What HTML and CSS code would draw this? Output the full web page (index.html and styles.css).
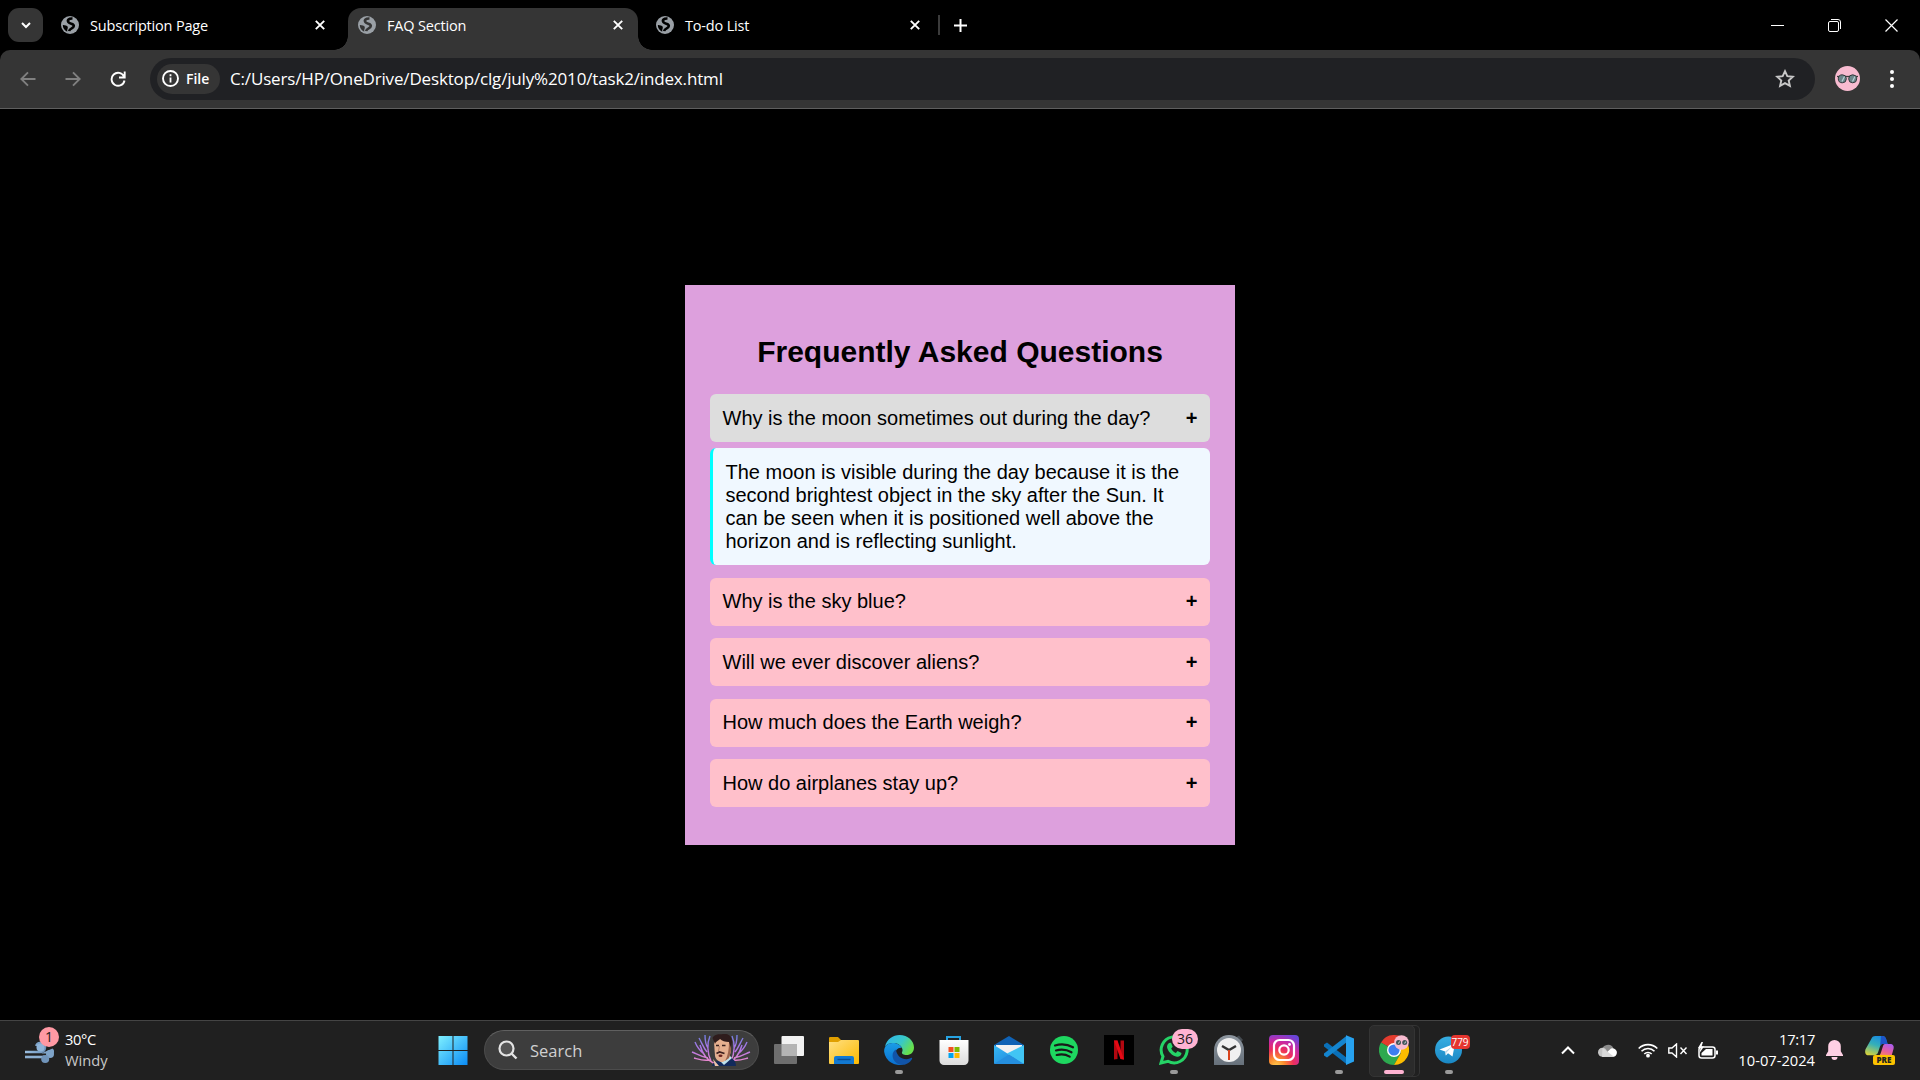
FILE: index.html
```html
<!DOCTYPE html>
<html lang="en">
<head>
<meta charset="utf-8">
<title>FAQ Section</title>
<link rel="stylesheet" href="styles.css">
</head>
<body>
<svg class="defs" width="0" height="0" aria-hidden="true">
  <defs>
    <symbol id="globe" viewBox="0 0 18 18">
      <circle cx="9" cy="9" r="9" fill="#9aa0a6"/>
      <path d="M11.500 2.500C7.800 2.300 6 4.200 7.500 6.200s5.500 1 5.300 3.800-4.300 1.800-4.600 5.200" fill="none" stroke="var(--hole)" stroke-width="2.600"/>
      <path d="M1.800 9c1.500.2 4.700.2 5 2.300.2 1.500-.8 1.700-.6 4.400C3.500 14.500 1.800 12 1.800 9z" fill="var(--hole)"/>
    </symbol>
    <symbol id="cross" viewBox="0 0 10 10"><path d="M.8.8l8.400 8.400M9.200.8L.8 9.200" stroke="#fff" stroke-width="1.900"/></symbol>
    <linearGradient id="winG" x1="0" y1="0" x2="1" y2="1"><stop offset="0" stop-color="#7ff0ff"/><stop offset="1" stop-color="#0a8bf5"/></linearGradient>
    <linearGradient id="folderG" x1="0" y1="0" x2="1" y2="1"><stop offset="0" stop-color="#ffe083"/><stop offset="1" stop-color="#fcb900"/></linearGradient>
    <linearGradient id="edgeTop" x1="0" y1="0" x2="1" y2=".5"><stop offset="0" stop-color="#2fb4ee"/><stop offset=".6" stop-color="#38c8c8"/><stop offset="1" stop-color="#67e04c"/></linearGradient>
    <linearGradient id="edgeLow" x1="0" y1="0" x2="0" y2="1"><stop offset="0" stop-color="#1a9de6"/><stop offset="1" stop-color="#0a6fd0"/></linearGradient>
    <linearGradient id="mailG" x1="0" y1="0" x2="1" y2="1"><stop offset="0" stop-color="#37b9f5"/><stop offset="1" stop-color="#1b7fd8"/></linearGradient>
    <linearGradient id="storeG" x1="0" y1="0" x2="0" y2="1"><stop offset="0" stop-color="#fff"/><stop offset="1" stop-color="#dcdcdc"/></linearGradient>
    <linearGradient id="clockG" x1="0" y1="0" x2="0" y2="1"><stop offset="0" stop-color="#8d969f"/><stop offset="1" stop-color="#67717b"/></linearGradient>
    <radialGradient id="instaG" cx=".25" cy="1.050" r="1.150"><stop offset="0" stop-color="#fed150"/><stop offset=".25" stop-color="#fb8a2e"/><stop offset=".5" stop-color="#ee2f5b"/><stop offset=".75" stop-color="#c82aa4"/><stop offset="1" stop-color="#6a45d8"/></radialGradient>
    <linearGradient id="tgG" x1="0" y1="0" x2="0" y2="1"><stop offset="0" stop-color="#37aee2"/><stop offset="1" stop-color="#1a87c4"/></linearGradient>
    <linearGradient id="windG" x1="0" y1="0" x2="1" y2="0"><stop offset="0" stop-color="#9cbfe0"/><stop offset="1" stop-color="#6d94bd"/></linearGradient>
    <linearGradient id="coA" x1=".6" y1="0" x2=".2" y2="1"><stop offset="0" stop-color="#1a8de0"/><stop offset=".45" stop-color="#35b0b8"/><stop offset="1" stop-color="#d8d23a"/></linearGradient>
    <linearGradient id="coB" x1=".8" y1="0" x2=".3" y2="1"><stop offset="0" stop-color="#a95cf0"/><stop offset=".6" stop-color="#e8609c"/><stop offset="1" stop-color="#f88a5a"/></linearGradient>
    <linearGradient id="coral" x1="0" y1="0" x2="0" y2="1"><stop offset="0" stop-color="#6f7ee0"/><stop offset=".5" stop-color="#b276e4"/><stop offset="1" stop-color="#f58cc8"/></linearGradient>
  </defs>
</svg>

<header class="tabs">
  <button class="tab-search"><svg width="10" height="7" viewBox="0 0 10 7"><path d="M1 1l4 4 4-4" fill="none" stroke="#fff" stroke-width="2"/></svg></button>
  <div class="tab tab-first"><svg class="globe"><use href="#globe"/></svg><span class="tab-title">Subscription Page</span><svg class="cross"><use href="#cross"/></svg></div>
  <div class="tab tab-active"><svg class="globe"><use href="#globe"/></svg><span class="tab-title">FAQ Section</span><svg class="cross"><use href="#cross"/></svg></div>
  <div class="tab tab-last"><svg class="globe"><use href="#globe"/></svg><span class="tab-title">To-do List</span><svg class="cross"><use href="#cross"/></svg></div>
  <span class="tab-line"></span>
  <svg class="plus" width="13" height="13" viewBox="0 0 13 13"><path d="M6.500 0v13M0 6.500h13" stroke="#fff" stroke-width="2"/></svg>
  <div class="window-buttons">
    <svg width="13" height="13" viewBox="0 0 13 13"><path d="M0 6.500h13" stroke="#fff"/></svg>
    <svg width="13" height="13" viewBox="0 0 13 13" fill="none" stroke="#fff"><rect x=".5" y="2.500" width="10" height="10" rx="1.500"/><path d="M3 .5h7a2.500 2.500 0 0 1 2.500 2.500v7" /></svg>
    <svg width="13" height="13" viewBox="0 0 13 13"><path d="M.5.5l12 12M12.500.5l-12 12" stroke="#fff" stroke-width="1.200"/></svg>
  </div>
</header>

<nav class="toolbar">
  <svg class="nav-icon dim" viewBox="0 0 16 16"><path d="M15.500 8H1.500M8 1.300L1.300 8 8 14.700"/></svg>
  <svg class="nav-icon dim" viewBox="0 0 16 16"><path d="M.5 8h14M8 1.300L14.700 8 8 14.700"/></svg>
  <svg class="nav-icon" viewBox="0 0 16 16"><path d="M14 5.500A6.500 6.500 0 1 0 14.500 9.500M14.700.5v6H9"/></svg>
  <div class="omnibox">
    <div class="chip"><svg width="17" height="17" viewBox="0 0 17 17"><circle cx="8.500" cy="8.500" r="7.500" fill="none" stroke="#fff" stroke-width="1.900"/><path d="M8.500 7.500v5M8.500 4.300v1.900" stroke="#fff" stroke-width="1.800"/></svg><span class="chip-text">File</span></div>
    <span class="url">C:/Users/HP/OneDrive/Desktop/clg/july%2010/task2/index.html</span>
    <svg class="star" width="20" height="19" viewBox="0 0 20 19"><path d="M10 2.200l2.300 5 5.500.6-4.100 3.700 1.200 5.400-4.900-2.800-4.900 2.800 1.200-5.400L2.200 7.800l5.500-.6z" fill="none" stroke="#c7c7c7" stroke-width="1.900"/></svg>
  </div>
  <svg class="avatar" viewBox="0 0 25 25"><circle cx="12.500" cy="12.500" r="12.500" fill="#f8bbd0"/><path d="M2 10.500h21" stroke="#3d3d3d" stroke-width="1.300"/><circle cx="7.300" cy="12.800" r="4" fill="#6d858a" stroke="#33393c"/><circle cx="17.700" cy="12.800" r="4" fill="#6d858a" stroke="#33393c"/><path d="M7 15.500l2.500-5M17.500 15.500l2.500-5" stroke="#b5cfd3" stroke-width="1.300"/></svg>
  <svg class="dots" width="4" height="18" viewBox="0 0 4 18" fill="#fff"><circle cx="2" cy="2" r="2"/><circle cx="2" cy="9" r="2"/><circle cx="2" cy="16" r="2"/></svg>
</nav>

<main class="page">
  <section class="faq">
    <h2 class="faq-title">Frequently Asked Questions</h2>
    <div class="question open"><span>Why is the moon sometimes out during the day?</span><b class="sign">+</b></div>
    <p class="answer">The moon is visible during the day because it is the second brightest object in the sky after the Sun. It can be seen when it is positioned well above the horizon and is reflecting sunlight.</p>
    <div class="question"><span>Why is the sky blue?</span><b class="sign">+</b></div>
    <div class="question"><span>Will we ever discover aliens?</span><b class="sign">+</b></div>
    <div class="question"><span>How much does the Earth weigh?</span><b class="sign">+</b></div>
    <div class="question"><span>How do airplanes stay up?</span><b class="sign">+</b></div>
  </section>
</main>

<footer class="taskbar">
  <div class="weather">
    <svg width="36" height="34" viewBox="0 0 36 34"><path d="M0 19h15.500a4.500 4.500 0 1 0-4.300-6" fill="none" stroke="url(#windG)" stroke-width="2.600"/><circle cx="15.500" cy="14.500" r="4" fill="#8fb4d8"/><path d="M0 24h19" stroke="#8db0d2" stroke-width="2.600"/><path d="M16 20.500h12.500a4 4 0 0 0-1-5z" fill="#7ea3c8"/><circle cx="25" cy="21" r="4" fill="#7ea3c8"/><circle cx="20.200" cy="26" r="4" fill="#7094ba"/></svg>
    <span class="weather-badge">1</span>
    <div class="weather-text"><span class="temp">30°C</span><span class="sky">Windy</span></div>
  </div>
  <div class="app"><svg viewBox="0 0 30 30"><path d="M.5 1h14v14h-14zM15.500 1h14v14h-14zM.5 16h14v14h-14zM15.500 16h14v14h-14z" fill="url(#winG)"/></svg></div>
  <div class="search">
    <svg class="lens" width="20" height="20" viewBox="0 0 20 20"><circle cx="8.500" cy="8.500" r="7" fill="#555" stroke="#e4e4e4" stroke-width="2.200"/><path d="M13.500 13.500l5 5" stroke="#e4e4e4" stroke-width="2.400"/></svg>
    <span class="search-text">Search</span>
    <svg class="portrait" width="60" height="34" viewBox="0 0 60 34">
      <g fill="none" stroke="url(#coral)" stroke-width="1.400"><path d="M24 31C16 27 12 22 9 12M17 25C10 24 6 21 1 19M13 21C8 17 6 14 4 9M20 28C16 20 16 10 19 3M17 15C14 11 14 7 14 2M16 19C12 14 11 10 8 5M18 27C12 28 7 26 3 25"/><path d="M36 31C44 27 48 22 51 12M43 25C50 24 54 21 59 19M47 21C52 17 54 14 56 9M40 28C44 20 44 10 41 3M43 15C46 11 46 7 46 2M44 19C48 14 49 10 52 5M42 27C48 28 53 26 57 25"/></g>
      <path d="M21 33c1-4 4-5 8-5l10-4c4 2 6 5 6 9z" fill="#132a5c"/><path d="M29 28l4 4 8-7-2-2z" fill="#bfe2ec"/>
      <path d="M23 9c0-6 16-7 17 0v9l-2 7-6 4c-4 0-7-2-8-6z" fill="#e5b090"/><path d="M38 9l2-1v10l-2 7-4 3c3-5 4-12 4-19z" fill="#9b644c"/><path d="M21.500 5C24 .5 28 1.500 32 1c5-.4 9 1 9 8l-1 6-2-6c-4 0-7-1-9-3-2 2-4 2-5 5z" fill="#2e1c1c"/><path d="M25.500 20.500l3-1.500 5 1.500" stroke="#3b1f1e" stroke-width="1.800" fill="none"/><ellipse cx="29.500" cy="22.800" rx="2" ry="1.200" fill="#6a2420"/><path d="M25 12.500h3M31 12.500h3.500" stroke="#38211f" stroke-width="1.400"/><path d="M28.500 13l-1 5" stroke="#b87f65"/><path d="M22 26l2 7h4z" fill="#f0c4a8"/>
    </svg>
  </div>
  <div class="app"><svg viewBox="0 0 30 30"><rect x="7.500" y="1" width="22.500" height="20" rx="1" fill="#f2f2f2"/><rect x="0" y="9" width="23" height="20" rx="1" fill="#6e6e6e"/><path d="M7.500 9H23v12H7.500z" fill="#b4b4b4"/></svg></div>
  <div class="app"><svg viewBox="0 0 30 30"><path d="M0 3.500A1.300 1.300 0 0 1 1.300 2H9l3.500 3.500V10H0z" fill="#e09f00"/><path d="M0 7h9l3-2h17a1 1 0 0 1 1 1v22a1 1 0 0 1-1 1H1a1 1 0 0 1-1-1z" fill="url(#folderG)"/><path d="M5 29v-6a2 2 0 0 1 2-2h16a2 2 0 0 1 2 2v6z" fill="#1279d2"/><path d="M8.500 24.500h13" stroke="#0b4d91" stroke-width="1.400"/></svg></div>
  <div class="app"><svg viewBox="0 0 30 30"><path d="M1 11.500C3 4 9 0 15.500 0 24 0 30 6 30 12.500c0 5-3.500 7.500-7.500 7.500-3 0-5-1-4.500-2.700.7-1.600.7-2.300.2-3.800C17 9.500 12 7.500 8 8c-3 .3-5.500 1.500-7 3.500z" fill="url(#edgeTop)"/><path d="M.2 17C-.3 11.500 3.500 8 8.500 8c4.500 0 8 2 9.500 5-5-1-8 4-6.500 9 1.200 4.500 4.500 7 8 7.300A15 15 0 0 1 .2 17z" fill="url(#edgeLow)"/><path d="M12 14.500c-4 2-4.500 7.500-1.500 11.500 4 5 11 5 15.500.7 1.700-1.700 2.400-3.200 2.100-3.700-.3-.4-1.200.2-2.400.6-6 2-13-1.500-13.700-9.100z" fill="#1154a8"/></svg><i class="running"></i></div>
  <div class="app"><svg viewBox="0 0 30 30"><path d="M8 6V2h13v4" fill="none" stroke="#27a3e2" stroke-width="2"/><path d="M.5 5h29v20.500a4.500 4.500 0 0 1-4.500 4.500H5a4.500 4.500 0 0 1-4.500-4.500z" fill="url(#storeG)"/><path d="M8 5h13" stroke="#27a3e2" stroke-width="0"/><path d="M9.500 12h5v5h-5z" fill="#f25022"/><path d="M15.500 12h5v5h-5z" fill="#7fba00"/><path d="M9.500 18h5v5h-5z" fill="#00a4ef"/><path d="M15.500 18h5v5h-5z" fill="#ffb900"/></svg></div>
  <div class="app"><svg viewBox="0 0 30 30"><path d="M0 10L15 1l15 9v5H0z" fill="#0f62b5"/><path d="M2 10h26v12H2z" fill="#f1f1f1"/><path d="M0 10l30 19H1a1 1 0 0 1-1-1z" fill="url(#mailG)"/><path d="M30 10v18a1 1 0 0 1-1 1L13 18.500z" fill="#41c5f4"/><path d="M15 19.500L30 29H0z" fill="#258fdf"/></svg></div>
  <div class="app"><svg viewBox="0 0 30 30"><circle cx="15" cy="15" r="14" fill="#1ed760"/><path d="M6 10.500c6-1.800 12.500-1.200 18 1.800M7 15.500c5-1.400 10.500-1 15.500 1.800M7.700 20c4.500-1.200 9-.8 13 1.600" fill="none" stroke="#191919" stroke-width="2.200" stroke-linecap="round"/></svg></div>
  <div class="app"><svg viewBox="0 0 30 30"><path d="M0 0h30v30H0z" fill="#000"/><path d="M10 5.500h3.500V24L10 24.500zM16.500 5.500H20v19l-3.500-.5z" fill="#b20710"/><path d="M10 5.500h3.500L20 24.500l-3.500-.5z" fill="#e50914"/></svg></div>
  <div class="app"><svg viewBox="0 0 30 30"><path d="M2 28l2-6.500A13 13 0 1 1 9 26.300z" fill="none" stroke="#25d366" stroke-width="3"/><path d="M10 8l2-.3 1.700 4-1.500 1.800c1 2 2.500 3.500 4.700 4.500l1.600-1.900 4 2c-.2 3-2.500 4-4.500 3.700C13 21 8.500 16 8 12c0-2 1-3.300 2-4z" fill="#25d366"/></svg><i class="running"></i><span class="badge pink">36</span></div>
  <div class="app"><svg viewBox="0 0 30 30"><path d="M21 3l4-2.500L29 5l-3 3z" fill="#454b51"/><path d="M0 30V15a15 15 0 0 1 30 0v15z" fill="url(#clockG)"/><circle cx="15" cy="15" r="12" fill="#f0f0f0"/><path d="M8 11l7 4 7-4" fill="none" stroke="#333" stroke-width="2.500"/><path d="M15 15v10" stroke="#d9431c" stroke-width="2"/></svg></div>
  <div class="app"><svg viewBox="0 0 30 30"><rect width="30" height="30" rx="4" fill="url(#instaG)"/><g fill="none" stroke="#fff" stroke-width="2.200"><rect x="5" y="5" width="20" height="20" rx="5.500"/><circle cx="15" cy="15" r="4.700"/></g><circle cx="20.500" cy="9.500" r="1.400" fill="#fff"/></svg></div>
  <div class="app"><svg viewBox="0 0 30 30"><path d="M0 9.500l3-2L23 23v6.500L0 11.500z" fill="#0a70b8"/><path d="M0 20.500l3 2L23 7V.500L0 18.500z" fill="#1485cf"/><path d="M22 .3L30 3.500v23L22 30z" fill="#27a2ef"/></svg><i class="running"></i></div>
  <div class="app chrome"><svg viewBox="0 0 30 30"><path d="M15 15L2 7.500A15 15 0 0 1 28 7.500z" fill="#e33b2e"/><path d="M2 7.500A15 15 0 0 0 15 30l6.500-11.300L15 15z" fill="#2da94f"/><path d="M28 7.500A15 15 0 0 1 15 30l6.500-11.300V7.500z" fill="#fdbd00"/><circle cx="15" cy="15" r="7" fill="#fff"/><circle cx="15" cy="15" r="5.600" fill="#3d7df0"/><circle cx="22.500" cy="7.500" r="7.300" fill="#f8bbd0"/><circle cx="19.500" cy="7.500" r="2.500" fill="#44555a"/><circle cx="25.700" cy="7.500" r="2.500" fill="#44555a"/><path d="M19.500 8.500l1-2M25.700 8.500l1-2" stroke="#d5e3e6"/></svg><i class="running active"></i></div>
  <div class="app"><svg viewBox="0 0 30 30"><circle cx="14.500" cy="15" r="13.500" fill="url(#tgG)"/><path d="M5.500 14.500L21 8.500l-2.500 13-4.500-3.300-2.200 2.200-.6-4z" fill="#fff"/><path d="M11.200 16.400L18 11.500l-5.500 6-.7 2.900z" fill="#b6d6e8"/></svg><i class="running"></i><span class="badge red">779</span></div>
  <div class="tray">
    <svg class="chev" width="14" height="9" viewBox="0 0 14 9"><path d="M1 7.500l6-6 6 6" fill="none" stroke="#fff" stroke-width="2"/></svg>
    <svg class="cloud" width="20" height="14" viewBox="0 0 20 14"><path d="M4 8a6 6 0 0 1 11.500-2.500L17 9H4z" fill="#8c8c8c"/><circle cx="4.500" cy="9.200" r="4.500" fill="#c4c4c4"/><path d="M4 13.700L13 5.500a4.200 4.200 0 0 1 3 8.200z" fill="#fff"/><path d="M4.500 4.800L16 13.700H4z" fill="#d9d9d9"/></svg>
    <svg class="wifi" width="20" height="16" viewBox="0 0 20 16"><g fill="none" stroke="#fff" stroke-width="1.600"><path d="M.7 6.500a13 13 0 0 1 18.600 0M3.500 9.300a9 9 0 0 1 13 0M6.300 12a5.200 5.200 0 0 1 7.400 0"/></g><circle cx="10" cy="13.700" r="1.900" fill="#fff"/></svg>
    <svg class="sound" width="20" height="15" viewBox="0 0 20 15"><path d="M.8 5H4l4.500-4v13L4 10H.8zM12.500 4.500l6 6.500M18.500 4.500l-6 6.500" fill="none" stroke="#fff" stroke-width="1.400"/></svg>
    <svg class="battery" width="20" height="17" viewBox="0 0 20 17"><rect x="1" y="5" width="16" height="11" rx="2.500" fill="none" stroke="#fff" stroke-width="1.500"/><path d="M3.500 13.500V11L8 7h6.500v6.500z" fill="#fff"/><path d="M18 8.500h2v4h-2z" fill="#fff"/><path d="M3.500 0L0 6h2.500l-1 5L6 4.500H3.500L5 0z" fill="#fff"/></svg>
    <div class="clock"><span class="time">17:17</span><span class="date">10-07-2024</span></div>
    <svg class="bell" width="17" height="20" viewBox="0 0 17 20"><path d="M8.500 0a6.300 6.300 0 0 1 6.300 6.300v5L17 15v1H0v-1l2.200-3.700v-5A6.300 6.300 0 0 1 8.500 0zM5.500 17h6a3 3 0 0 1-6 0z" fill="#ffd0e4"/></svg>
    <svg class="copilot" width="30" height="29" viewBox="0 0 30 29"><path d="M6 3.500C7 1 8 0 10.500 0H17c2.500 0 3.300 1 4 3l1.500 5h-4.300c-1.700 0-2.500.6-3.200 2.600l-2 6c-.7 2-2 2.700-4 2.700H4c-3.500 0-4.500-2.500-3.500-6z" fill="url(#coA)"/><path d="M16 0h1.500c2 0 3 1 3.700 3l1.500 5H18c-1.700 0-2.300.6-3 2.600z" fill="#1c55c8"/><path d="M20 8h5c3 0 4.300 2 3.500 5l-2 7H12c2 0 3-.6 3.700-2.700l2-6.300c.6-2 1-2.700 2.300-3z" fill="url(#coB)"/></svg>
    <span class="pre">PRE</span>
  </div>
</footer>
</body>
</html>
```
FILE: styles.css
```css
* { box-sizing: border-box; }
body {
  margin: 0;
  height: 1080px;
  overflow: hidden;
  display: flex;
  flex-direction: column;
  background: #000;
  color: #fff;
  font-family: "Open Sans", "Noto Sans", sans-serif;
}
svg { display: block; flex: none; }
.defs { position: absolute; }

/* Tab strip */
.tabs { height: 50px; display: flex; align-items: center; padding-left: 8px; flex: none; }
.tab-search { width: 35px; height: 34px; border: 0; padding: 0; border-radius: 11px; background: #353535; display: grid; place-items: center; }
.tab { display: flex; align-items: center; height: 42px; --hole: #000; }
.globe { width: 18px; height: 18px; margin-right: 11px; }
.cross { width: 10px; height: 10px; }
.tab-title { flex: 1; font-size: 14.5px; letter-spacing: -.18px; white-space: nowrap; }
.tab-first { width: 264px; margin-left: 18px; }
.tab-active {
  position: relative;
  align-self: flex-end;
  width: 290px;
  margin-left: 23px;
  padding: 0 15px 8px 10px;
  border-radius: 13px 13px 0 0;
  background: #353535;
  --hole: #353535;
}
.tab-active::before, .tab-active::after { content: ""; position: absolute; bottom: 0; width: 14px; height: 14px; }
.tab-active::before { right: 100%; background: radial-gradient(circle at 0 0, transparent 13.500px, #353535 14px); }
.tab-active::after { left: 100%; background: radial-gradient(circle at 100% 0, transparent 13.500px, #353535 14px); }
.tab-last { width: 264px; margin-left: 18px; }
.tab-line { width: 2px; height: 20px; margin-left: 18px; background: #3b3b3b; }
.plus { margin-left: 14px; }
.window-buttons { display: flex; gap: 44px; margin-left: auto; padding-right: 22px; }

/* Address row */
.toolbar { height: 59px; flex: none; display: flex; align-items: center; padding: 0 26px 1px 20px; border-bottom: 1px solid #5f5f5f; border-radius: 10px 10px 0 0; background: #353535; }
.nav-icon { width: 16px; height: 16px; margin-right: 29px; fill: none; stroke: #fff; stroke-width: 1.900; }
.nav-icon.dim { stroke: #808080; }
.omnibox { width: 1665px; height: 42px; margin-left: -5px; padding: 0 20px 0 7px; border-radius: 21px; background: #202124; display: flex; align-items: center; }
.chip { width: 63px; height: 30px; padding-left: 5px; border-radius: 15px; background: #353535; display: flex; align-items: center; gap: 7px; }
.chip-text { font-size: 14px; font-weight: 600; }
.url { flex: 1; margin-left: 10px; font-size: 17px; letter-spacing: -.16px; }
.avatar { width: 25px; height: 25px; margin-left: 20px; }
.dots { margin-left: auto; }

/* FAQ page */
.page { flex: 1; display: flex; justify-content: center; align-items: center; padding-top: 1px; font-family: "Liberation Sans", Arial, sans-serif; color: #000; }
.faq { width: 550px; padding: 25px; background: #dda0dd; }
.faq-title { margin: 25px 0; font-size: 30px; line-height: 34px; text-align: center; }
.question { height: 48px; margin-bottom: 12.5px; padding: 0 12.5px; border-radius: 6px; background: #ffc0cb; display: flex; align-items: center; justify-content: space-between; font-size: 20px; line-height: 23px; }
.question.open { margin-bottom: 6.250px; background: #ddd; }
.sign { font-size: 20px; }
.answer { margin: 0 0 12.500px; padding: 12.500px; border-left: 3px solid #00ffff; border-radius: 6px; background: #f0f8ff; font-size: 20px; line-height: 23px; }

/* Taskbar */
.taskbar { height: 60px; flex: none; display: flex; align-items: center; padding-bottom: 1px; border-top: 1px solid #444; background: #202020; }
.weather { position: relative; width: 425.5px; padding-left: 25px; display: flex; align-items: center; gap: 4px; }
.weather-badge { position: absolute; left: 39px; top: -3px; width: 20px; border-radius: 50%; background: #ff99a4; text-align: center; font-size: 14px; line-height: 20px; color: #1a1a1a; }
.weather-text, .clock { display: flex; flex-direction: column; font-size: 14.7px; line-height: 20.500px; }
.weather-text { margin-top: -1px; }
.temp { letter-spacing: -.4px; }
.sky { color: #c8c8c8; }
.app { position: relative; width: 55px; height: 50px; flex: none; display: grid; place-items: center; }
.app > svg { width: 30px; height: 30px; }
.running { position: absolute; left: 23.5px; bottom: 1px; width: 8px; height: 4px; border-radius: 2px; background: #9a9a9a; }
.running.active { left: 17.5px; width: 20px; background: #ffb3d2; }
.chrome::before, .chrome::after { content: ""; position: absolute; top: 0; height: 50px; border: 1px solid #343434; border-radius: 5px; }
.chrome::before { left: 2.5px; width: 44px; background: #2b2b2b; }
.chrome::after { left: 44px; width: 8px; border-left: 0; border-radius: 0 5px 5px 0; }
.chrome > svg { position: relative; }
.badge { position: absolute; color: #1a1a1a; text-align: center; }
.badge.pink { left: 25.500px; top: 4px; width: 26px; height: 20px; border-radius: 10px; background: #ffb3d2; font-size: 14px; line-height: 20px; }
.badge.red { left: 29px; top: 10px; width: 19px; height: 14px; border-radius: 4px; background: #e5352f; color: #fff; font-size: 10px; line-height: 14px; }
.search { width: 275px; height: 40px; flex: none; margin: 0 2.500px 0 3.500px; padding: 0 7px 0 13px; border: 1px solid #4c4c4c; border-top-color: #606060; border-radius: 20px; background: #3d3d3d; display: flex; align-items: center; }
.search-text { flex: 1; margin-left: 12px; font-size: 16.5px; color: #d0d0d0; }
.tray { position: relative; flex: 1; display: flex; align-items: center; padding-left: 84.500px; }
.cloud { margin-left: 23px; }
.wifi { margin-left: 20px; }
.sound { margin-left: 10px; }
.battery { margin-left: 10px; }
.clock { width: 97px; margin-top: -1px; text-align: right; }
.time { letter-spacing: -.3px; }
.bell { margin-left: 11px; }
.copilot { margin-left: 22px; }
.pre { position: absolute; right: 25px; bottom: 5px; width: 22px; height: 10px; border-radius: 2px; background: #fcc200; color: #222; font-size: 8px; font-weight: 800; line-height: 10px; text-align: center; }
```
